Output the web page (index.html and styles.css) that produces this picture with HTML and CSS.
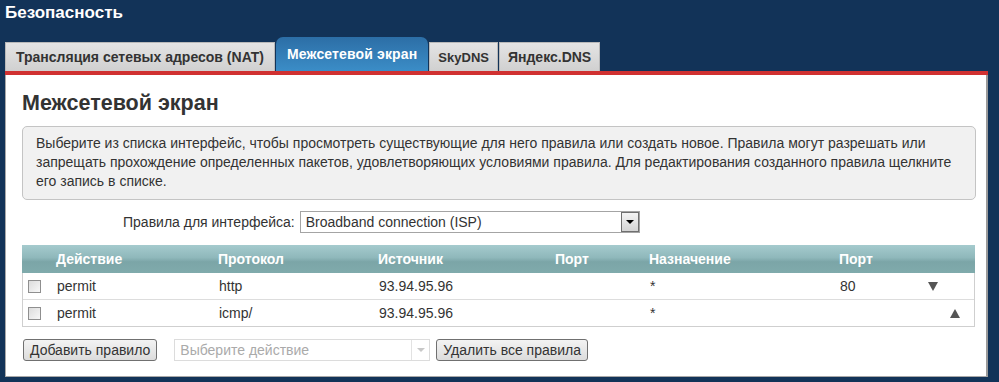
FILE: index.html
```html
<!DOCTYPE html>
<html lang="ru">
<head>
<meta charset="utf-8">
<title>Безопасность</title>
<link rel="stylesheet" href="styles.css">
</head>
<body>
<div class="page">
  <div class="page-title">Безопасность</div>
  <div class="tabs">
    <div class="tab tab-nat">Трансляция сетевых адресов (NAT)</div>
    <div class="tab active">Межсетевой экран</div>
    <div class="tab tab-sky">SkyDNS</div>
    <div class="tab tab-yandex">Яндекс.DNS</div>
  </div>
  <div class="redbar"></div>
  <div class="panel">
    <h1 class="heading">Межсетевой экран</h1>
    <div class="info">Выберите из списка интерфейс, чтобы просмотреть существующие для него правила или создать новое. Правила могут разрешать или запрещать прохождение определенных пакетов, удовлетворяющих условиями правила. Для редактирования созданного правила щелкните его запись в списке.</div>
    <div class="iface-row">
      <span class="iface-label">Правила для интерфейса:</span>
      <div class="select">
        <span class="select-text">Broadband connection (ISP)</span>
        <span class="select-btn"><span class="tri-down-black"></span></span>
      </div>
    </div>
    <div class="table">
      <div class="thead row">
        <div></div>
        <div>Действие</div>
        <div>Протокол</div>
        <div>Источник</div>
        <div>Порт</div>
        <div>Назначение</div>
        <div>Порт</div>
      </div>
      <div class="trow row">
        <div><span class="cb"></span></div>
        <div>permit</div>
        <div>http</div>
        <div>93.94.95.96</div>
        <div></div>
        <div>*</div>
        <div class="last"><span class="port">80</span><span class="move down"></span></div>
      </div>
      <div class="trow row">
        <div><span class="cb"></span></div>
        <div>permit</div>
        <div>icmp/</div>
        <div>93.94.95.96</div>
        <div></div>
        <div>*</div>
        <div class="last"><span class="port"></span><span class="move up"></span></div>
      </div>
    </div>
    <div class="actions">
      <button class="btn">Добавить правило</button>
      <div class="select disabled">
        <span class="select-text">Выберите действие</span>
        <span class="select-btn"><span class="tri-down-gray"></span></span>
      </div>
      <button class="btn">Удалить все правила</button>
    </div>
  </div>
</div>
</body>
</html>
```
FILE: styles.css
```css
html, body {
  margin: 0;
  padding: 0;
}
body {
  background: #123358;
  font-family: "Liberation Sans", Arial, sans-serif;
  color: #333;
  width: 999px;
  height: 382px;
  overflow: hidden;
}
.page {
  padding: 0 11px 0 5px;
}
.page-title {
  color: #fff;
  font-weight: bold;
  font-size: 17px;
  line-height: 20px;
  padding-top: 3px;
  height: 34px;
  box-sizing: border-box;
}
.tabs {
  display: flex;
  align-items: flex-end;
  height: 37px;
}
.tab {
  height: 28px;
  line-height: 29px;
  padding: 0 8px;
  font-size: 14px;
  font-weight: bold;
  color: #333;
  background: linear-gradient(#e4e4e4, #d0d0d0);
  border: 1px solid #b9b9b9;
  border-bottom: none;
  margin-right: 1px;
  white-space: nowrap;
}
.tab-nat {
  padding: 0 10px;
}
.tab-sky {
  font-size: 13px;
  padding: 0 8px;
}
.tab.active {
  height: 34px;
  line-height: 34px;
  color: #fff;
  background: linear-gradient(#2c6ea6, #3b8dc7);
  border: none;
  border-radius: 7px 7px 0 0;
  padding: 0 11px;
  letter-spacing: 0.15px;
}
.redbar {
  height: 4px;
  background: #d03131;
}
.panel {
  background: #fff;
  border: 1px solid #a8a8a8;
  border-top: none;
  border-right: 2px solid #9a9a9a;
  height: 302px;
  box-sizing: border-box;
  padding: 0 10px 0 16px;
}
.heading {
  margin: 0;
  padding-top: 16px;
  font-size: 21.5px;
  line-height: 24px;
  font-weight: bold;
  color: #333;
  height: 51px;
  box-sizing: border-box;
}
.info {
  background: #f1f1f1;
  border: 1px solid #c4c4c4;
  border-radius: 5px;
  padding: 7px 13px 8px;
  font-size: 14px;
  line-height: 19px;
  color: #333;
}
.iface-row {
  display: flex;
  align-items: center;
  margin-top: 10px;
  padding-left: 101px;
  height: 24px;
}
.iface-label {
  font-size: 14px;
  margin-right: 5px;
}
.select {
  display: flex;
  align-items: center;
  justify-content: space-between;
  width: 340px;
  height: 22px;
  box-sizing: border-box;
  border: 1px solid #a4a4a4;
  background: #fff;
  font-size: 14px;
  padding-left: 5px;
}
.select-btn {
  width: 18px;
  height: 20px;
  box-sizing: border-box;
  border: 1px solid #6f6f6f;
  background: linear-gradient(#f4f4f4, #d4d4d4);
  display: flex;
  align-items: center;
  justify-content: center;
}
.tri-down-black {
  width: 0;
  height: 0;
  border-left: 4px solid transparent;
  border-right: 4px solid transparent;
  border-top: 4px solid #000;
}
.tri-down-gray {
  width: 0;
  height: 0;
  border-left: 4px solid transparent;
  border-right: 4px solid transparent;
  border-top: 4px solid #c8c8c8;
}
.table {
  margin-top: 11px;
  width: 953px;
  border: 1px solid #cfcfcf;
  border-top: none;
  box-sizing: border-box;
}
.row {
  display: grid;
  grid-template-columns: 34px 162px 160px 177px 94px 190px 1fr;
  align-items: center;
  font-size: 14px;
}
.thead {
  height: 28px;
  margin: 0 -1px;
  background: linear-gradient(#a5cbce 0%, #8fb8bb 45%, #7ba5a7 60%, #80abac 100%);
  color: #fff;
  font-weight: bold;
}
.trow {
  height: 26px;
  color: #333;
}
.trow + .trow {
  border-top: 1px solid #ddd;
}
.cb {
  display: block;
  width: 11px;
  height: 11px;
  margin-left: 5px;
  border: 1px solid #8f8f8f;
  background: linear-gradient(135deg, #dcdcdc, #f8f8f8);
}
.last {
  display: flex;
  align-items: center;
}
.port {
  width: 88px;
}
.move {
  width: 0;
  height: 0;
  border-left: 5px solid transparent;
  border-right: 5px solid transparent;
}
.move.down {
  border-top: 9px solid #555;
}
.move.up {
  margin-left: 22px;
  border-bottom: 9px solid #555;
}
.actions {
  display: flex;
  align-items: center;
  margin-top: 12px;
  padding-left: 1px;
}
.btn {
  height: 22px;
  box-sizing: border-box;
  border: 1px solid #707070;
  border-radius: 3px;
  background: linear-gradient(#f3f3f3, #dcdcdc);
  font-family: "Liberation Sans", Arial, sans-serif;
  font-size: 14px;
  color: #333;
  padding: 0 6px;
  line-height: 18px;
}
.select.disabled {
  width: 256px;
  margin: 0 6px 0 17px;
  border-color: #dcdcdc;
  color: #aaa;
  font-size: 14px;
}
.select.disabled .select-btn {
  border: none;
  border-left: 1px solid #e2e2e2;
  background: #fff;
  height: 20px;
}
```
